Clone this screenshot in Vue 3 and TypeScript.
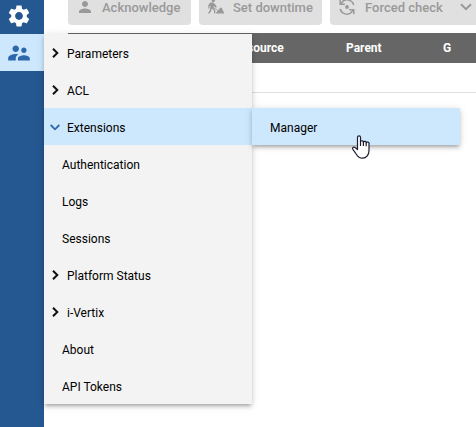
<script setup lang="ts">
interface MenuEntry {
  label: string
  group?: boolean
  open?: boolean
}

const entries: MenuEntry[] = [
  { label: 'Parameters', group: true },
  { label: 'ACL', group: true },
  { label: 'Extensions', group: true, open: true },
  { label: 'Authentication' },
  { label: 'Logs' },
  { label: 'Sessions' },
  { label: 'Platform Status', group: true },
  { label: 'i-Vertix', group: true },
  { label: 'About' },
  { label: 'API Tokens' },
]
</script>

<template>
  <div class="app">
    <nav class="rail">
      <div class="rail-item">
        <svg viewBox="0 0 24 24" fill="#fff"><path d="M19.14 12.94c.04-.3.06-.61.06-.94 0-.32-.02-.64-.07-.94l2.03-1.58c.18-.14.23-.41.12-.61l-1.92-3.32c-.12-.22-.37-.29-.59-.22l-2.39.96c-.5-.38-1.03-.7-1.62-.94l-.36-2.54c-.04-.24-.24-.41-.48-.41h-3.84c-.24 0-.43.17-.47.41l-.36 2.54c-.59.24-1.13.57-1.62.94l-2.39-.96c-.22-.08-.47 0-.59.22L2.74 8.87c-.12.21-.08.47.12.61l2.03 1.58c-.05.3-.09.63-.09.94s.02.64.07.94l-2.03 1.58c-.18.14-.23.41-.12.61l1.92 3.32c.12.22.37.29.59.22l2.39-.96c.5.38 1.03.7 1.62.94l.36 2.54c.05.24.24.41.48.41h3.84c.24 0 .44-.17.47-.41l.36-2.54c.59-.24 1.13-.56 1.62-.94l2.39.96c.22.08.47 0 .59-.22l1.92-3.32c.12-.22.07-.47-.12-.61l-2.01-1.58zM12 15.6c-1.98 0-3.6-1.62-3.6-3.6s1.62-3.6 3.6-3.6 3.6 1.62 3.6 3.6-1.62 3.6-3.6 3.6z" /></svg>
      </div>
      <div class="rail-item active">
        <svg viewBox="0 0 24 24" fill="#2e68aa"><path d="M16.5 12c1.38 0 2.49-1.12 2.49-2.5S17.88 7 16.5 7C15.12 7 14 8.12 14 9.5s1.12 2.5 2.5 2.5zM9 11c1.66 0 2.99-1.34 2.99-3S10.66 5 9 5C7.34 5 6 6.34 6 8s1.34 3 3 3zm7.5 3c-1.83 0-5.5.92-5.5 2.75V19h11v-2.25c0-1.83-3.67-2.75-5.5-2.75zM9 13c-2.33 0-7 1.17-7 3.5V19h7v-2.25c0-.85.33-2.34 2.37-3.47C10.5 13.1 9.66 13 9 13z" /></svg>
      </div>
    </nav>

    <main class="content">
      <div class="toolbar">
        <div class="btn">
          <svg class="ico" viewBox="0 0 24 24" fill="currentColor"><path d="M12 12c2.21 0 4-1.79 4-4s-1.79-4-4-4-4 1.79-4 4 1.79 4 4 4zm0 2c-2.67 0-8 1.34-8 4v2h16v-2c0-2.66-5.33-4-8-4z" /></svg>
          <span>Acknowledge</span>
        </div>
        <div class="btn">
          <svg class="ico" viewBox="0 0 18 18" fill="currentColor">
            <circle cx="6.3" cy="2.6" r="1.7" />
            <path d="M3.2 4.600 6 4.400l2.400 2.200 1.400 2.300-1 .8-2-1.800-.3 2 1.800 2V15.500H7v-3l-2.200-2L4 13.500l-1.800 2H.8l2-3.300L3.600 7.500l-1.100.8V10.500H1.300V7.200z" />
            <path d="M2 7 10.500 12" stroke="currentColor" stroke-width=".8" />
            <path d="M8.800 15.500l1.700-3 1.400-.8 1-2h1.700l1.500 3 1.200 2.800z" />
          </svg>
          <span>Set downtime</span>
        </div>
        <div class="btn split">
          <svg class="ico" viewBox="0 0 18 18" fill="none" stroke="currentColor" stroke-width="1.500">
            <path d="M4.300 3.700A7 7 0 0 1 15.800 7M2.200 11a7 7 0 0 0 11.500 3.300" />
            <path d="M2.200 1.800v4.500h4.600M15.800 16.200v-4.500h-4.600" />
            <path d="M2.200 6.300 5 3.500M15.800 11.700 13 14.500" />
            <circle cx="9" cy="9" r="1.900" fill="currentColor" stroke="none" />
          </svg>
          <span>Forced check</span>
          <svg class="drop" viewBox="0 0 12 8" fill="none" stroke="currentColor" stroke-width="2"><path d="M1 1.200 6 6.200 11 1.200" /></svg>
        </div>
      </div>
      <div class="thead">
        <span class="resource">Resource</span>
        <span class="parent">Parent</span>
        <span>G</span>
      </div>
      <div class="row"></div>
    </main>

    <div class="menu">
      <div v-for="e in entries" :key="e.label" class="entry" :class="{ group: e.group, open: e.open }">
        <svg v-if="e.group && e.open" class="down" viewBox="0 0 10 7" fill="none" stroke="#2e68aa" stroke-width="1.800"><path d="M.7 1 5 5.300 9.300 1" /></svg>
        <svg v-else-if="e.group" class="right" viewBox="0 0 7 10" fill="none" stroke="#111" stroke-width="2"><path d="M1 .7 5.300 5 1 9.300" /></svg>
        <span>{{ e.label }}</span>
      </div>
    </div>
    <div class="submenu">Manager</div>

    <svg class="cursor" viewBox="0 0 18 24" fill="#fff" stroke="#1c1c30" stroke-width="1.200" stroke-linejoin="round" stroke-linecap="round">
      <path d="M5.500 14.500V2.300a1.500 1.500 0 0 1 3 0V7a1.400 1.400 0 0 1 2.900.5 1.400 1.400 0 0 1 2.800.7 1.400 1.400 0 0 1 2.800.8v6.500c0 4-2.500 7.700-6.500 7.700-3 0-4.700-1.400-6-3.700L.9 14.300c-.9-1.700 1-2.900 2.200-1.800z" />
      <path d="M8.500 7v3.500M11.400 7.700v2.800M14.200 8.500v2.300" fill="none" />
    </svg>
  </div>
</template>

<style>
body {
  margin: 0;
  background: #fff;
}
</style>

<style scoped>
.app {
  position: relative;
  display: flex;
  width: 476px;
  height: 427px;
  overflow: hidden;
  background: #fff;
  font-family: Roboto, "Liberation Sans", sans-serif;
  color: #000;
}
svg {
  display: block;
  flex: none;
}
.rail {
  flex: none;
  width: 44px;
  background: #255891;
}
.rail-item {
  box-sizing: border-box;
  height: 34px;
  padding: 3px 0 0 6px;
}
.rail-item svg {
  width: 26px;
  height: 26px;
}
.rail-item.active {
  height: 37px;
  padding-top: 6px;
  background: #cde7fd;
}
.content {
  flex: 1;
  min-width: 0;
  padding-left: 24px;
}
.toolbar {
  display: flex;
  gap: 8px;
  margin: -11px 0 8px;
}
.btn {
  display: flex;
  flex: none;
  align-items: center;
  box-sizing: border-box;
  width: 123px;
  height: 36px;
  padding-left: 8px;
  border-radius: 4px;
  background: #e0e0e0;
  color: #999;
  font-size: 13px;
  font-weight: 500;
  white-space: nowrap;
}
.btn span {
  margin: 1px 0 0 8px;
}
.btn .ico {
  width: 18px;
  height: 18px;
}
.split {
  width: 160px;
}
.split span {
  margin-left: 9px;
}
.split .drop {
  width: 12px;
  height: 8px;
  margin-left: 17px;
}
.thead {
  display: flex;
  align-items: center;
  height: 30px;
  background: #666;
  color: #fff;
  font-size: 12px;
  font-weight: 700;
}
.resource {
  width: 113px;
  padding-left: 165px;
}
.parent {
  width: 97px;
}
.row {
  height: 29px;
  border-bottom: 1px solid #e0e0e0;
}
.menu {
  position: absolute;
  top: 34px;
  left: 44px;
  width: 208px;
  background: #f3f3f3;
  box-shadow: 0 3px 3px -2px rgba(0, 0, 0, 0.2), 0 3px 4px rgba(0, 0, 0, 0.14), 0 1px 8px rgba(0, 0, 0, 0.12);
}
.entry {
  display: flex;
  align-items: center;
  box-sizing: border-box;
  height: 37px;
  padding: 2px 0 0 18px;
  font-size: 12px;
}
.entry.group {
  padding-left: 6px;
}
.entry.open {
  background: #cde7fd;
}
.right {
  width: 7px;
  height: 10px;
  margin: 0 8px 2px 2px;
}
.down {
  width: 10px;
  height: 7px;
  margin: 0 7px 1px 0;
}
.submenu {
  position: absolute;
  top: 108px;
  left: 252px;
  display: flex;
  align-items: center;
  box-sizing: border-box;
  width: 208px;
  height: 37px;
  padding: 2px 0 0 18px;
  background: #cde7fd;
  font-size: 12px;
  box-shadow: 0 3px 3px -2px rgba(0, 0, 0, 0.2), 0 3px 4px rgba(0, 0, 0, 0.14), 0 1px 8px rgba(0, 0, 0, 0.12);
}
.cursor {
  position: absolute;
  top: 135px;
  left: 352px;
  width: 18px;
  height: 24px;
}
</style>
